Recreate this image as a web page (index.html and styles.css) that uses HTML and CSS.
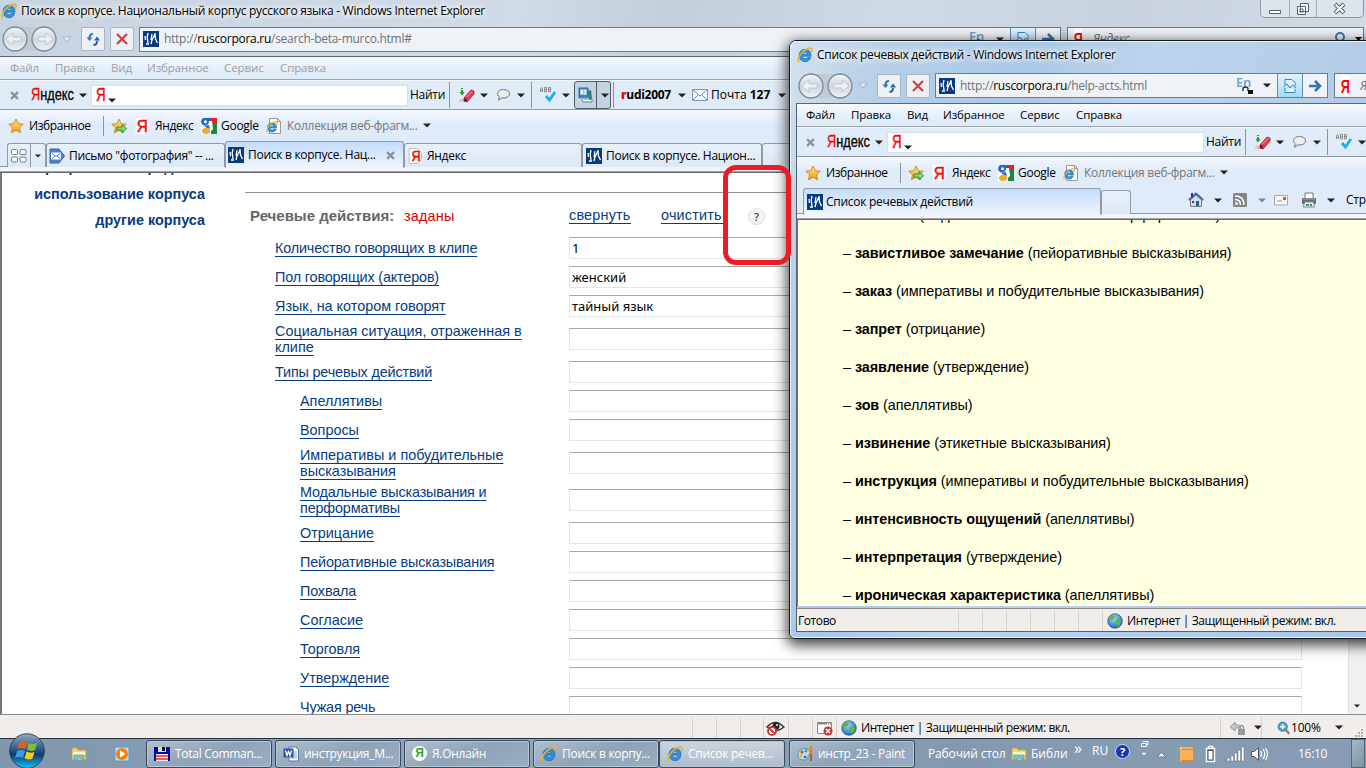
FILE: index.html
```html
<!DOCTYPE html>
<html lang="ru">
<head>
<meta charset="utf-8">
<title>Поиск в корпусе. Национальный корпус русского языка</title>
<link rel="stylesheet" href="styles.css">
</head>
<body>
<svg class="defs" width="0" height="0">
  <defs>
    <linearGradient id="gold" x1="0" y1="0" x2="0" y2="1"><stop offset="0" stop-color="#ffe88a"/><stop offset="1" stop-color="#f29a12"/></linearGradient>
    <radialGradient id="sea" cx=".4" cy=".3" r=".8"><stop offset="0" stop-color="#9cd8ff"/><stop offset="1" stop-color="#1557b8"/></radialGradient>
    <linearGradient id="disc" x1="0" y1="0" x2="0" y2="1"><stop offset="0" stop-color="#f3f6f9"/><stop offset=".5" stop-color="#cdd5de"/><stop offset="1" stop-color="#eef3f8"/></linearGradient>
    <linearGradient id="orb" x1="0" y1="0" x2="0" y2="1"><stop offset="0" stop-color="#8fa9bd"/><stop offset=".45" stop-color="#2b5c86"/><stop offset=".6" stop-color="#0b3c6d"/><stop offset="1" stop-color="#19c0f5"/></linearGradient>
    <symbol id="ie" viewBox="0 0 16 16"><path d="M14 9.300H5.400c.3 1.700 1.400 2.400 2.800 2.400 1.100 0 1.900-.5 2.300-1.200h3.200c-.7 2.700-2.900 4.200-5.500 4.200-3.700 0-6.200-2.500-6.200-6.100S4.500 2.300 8.200 2.300c3.800 0 6 2.700 5.800 7zM5.500 7.200h5c-.2-1.300-1.100-2-2.400-2s-2.300.7-2.600 2z" fill="#2a93e2" stroke="#1261ae" stroke-width=".6"/><path d="M2.200 14.800C.2 14 1.300 9.800 4.700 6 8.300 2 13 .2 14.600 1.500c.9.800.5 2.300-.4 4" fill="none" stroke="#eeb11f" stroke-width="1.600"/></symbol>
    <symbol id="rc" viewBox="0 0 16 16"><path d="M0 0h16v16H0z" fill="#063c7e"/><path d="M2 5l.5 4M5 2L4.200 6l.8 6M3 13h3M12 3L9 9l-1 4M12 2l.5 6 2 4M9 3l-1 6" fill="none" stroke="#fff" stroke-width="1.300"/></symbol>
    <symbol id="dn" viewBox="0 0 8 5"><path d="M0 .5h8L4 4.500z" fill="#222"/></symbol>
    <symbol id="star" viewBox="0 0 16 16"><path d="M8 1l2.200 4.700 5 .5-3.700 3.500 1 5L8 12.300 3.500 14.700l1-5L.8 6.200l5-.5z" fill="url(#gold)" stroke="#c7821b" stroke-width=".9"/></symbol>
    <symbol id="staradd" viewBox="0 0 16 16"><use href="#star"/><path d="M6 9h5V6.700l4.600 4-4.600 4v-2.500H6z" fill="#84dc6a" stroke="#278c27" stroke-width=".9"/></symbol>
    <symbol id="goog" viewBox="0 0 16 16"><path d="M0 0h8v16H0z" fill="#fff"/><path d="M8 0h8v5H8z" fill="#e22020"/><path d="M10 5h6v11h-6z" fill="#168b3e"/><path d="M6 0a4 4 0 100 7 4 4 0 002-3L10 0z" fill="#2469c8"/><circle cx="4.500" cy="3.700" r="1.500" fill="#fff"/><ellipse cx="5" cy="13" rx="4" ry="3" fill="#f2ab22"/><path d="M3 8l5-1 2 4-4-1z" fill="#2469c8"/><path d="M8 3h3l1 8-2 2-2-5z" fill="#fff"/></symbol>
    <symbol id="iedoc" viewBox="0 0 16 16"><path d="M3.500.5h8l3 3v12h-11z" fill="#fafafa" stroke="#999"/><path d="M11.500.5v3h3" fill="none" stroke="#999"/><svg y="3" width="12" height="12" viewBox="0 0 16 16"><use href="#ie"/></svg></symbol>
    <symbol id="eraser" viewBox="0 0 16 16"><path d="M1 12h5v3H0z" fill="#f5b8b5"/><path d="M3 1v1M3 3v2" stroke="#25a220" stroke-width="2"/><path d="M.5 5h5L3 8.500z" fill="#25a220"/><path d="M5 11l7-8 3 1v3l-7 8-3-1z" fill="#e53c50" stroke="#a61c34" stroke-width=".8"/><path d="M5 11l3 1v3l-3-1z" fill="#801a2a"/><path d="M7.500 10l6-6" stroke="#ff9ca6"/></symbol>
    <symbol id="bub" viewBox="0 0 16 16"><path d="M7.500 2.500c3.500 0 6 1.700 6 4.200s-2.500 4.300-5.500 4.300c-.7 0-1.500-.1-2-.3l-3.500 2.500.8-3.500C2 8.800 1.500 8 1.500 6.700c0-2.500 2.500-4.200 6-4.200z" fill="#eaecee" stroke="#72777c"/></symbol>
    <symbol id="check" viewBox="0 0 18 18"><path d="M1.500 6V3L2.500 1.500 3.500 3v3M1.500 4.500h2M5.500 6V1.500h2v4.300h-2M5.500 3.500h2M9.500 6V1.500h2v4.300h-2M9.500 3.500h2" fill="none" stroke="#777" stroke-width=".8"/><path d="M7 10l3.500 4L16 6" fill="none" stroke="#22a9ee" stroke-width="2.800"/></symbol>
    <symbol id="dict" viewBox="0 0 18 18"><path d="M4 13h11v3H6z" fill="#e9ffff" stroke="#29928f"/><path d="M11 5l3-1 1 9-3 1z" fill="#16867e"/><path d="M2 2h9v11H2z" fill="#4188bd" stroke="#2b6796"/><path d="M3 3h7v6H3z" fill="#8fbedd"/><path d="M4 8l1-4 1 4M7 5h2L7.500 8H9" fill="none" stroke="#fff"/><path d="M1 13h11" stroke="#fff"/></symbol>
    <symbol id="mail" viewBox="0 0 16 12"><path d="M.5.5h15v11H.5z" fill="#f5f8fb" stroke="#7c96ba"/><path d="M1 1l7 6 7-6M1 11l5-5M15 11l-5-5" fill="none" stroke="#6c8ab2"/></symbol>
    <symbol id="mailblue" viewBox="0 0 16 16"><path d="M1 1h9l5.500 7L10 15H1z" fill="#4882ca" stroke="#2d66ae"/><path d="M2 4.500h10v7H2z" fill="#fff"/><path d="M2.500 5L7 8.700 11.500 5M2.500 11l3.500-3M11.500 11L8 8" fill="none" stroke="#5489ca"/></symbol>
    <symbol id="quick" viewBox="0 0 16 14"><g fill="#f3f6fa" stroke="#7a828e"><rect x=".5" y=".5" width="6" height="5" rx="1"/><rect x="9" y=".5" width="6" height="5" rx="1"/><rect x=".5" y="8" width="6" height="5" rx="1"/><rect x="9" y="8" width="6" height="5" rx="1"/></g></symbol>
    <symbol id="navs" viewBox="0 0 58 28"><path d="M15 2h28v24H15z" fill="#c1cbd5"/><g fill="url(#disc)" stroke="#7e8893" stroke-width="1.300"><circle cx="14" cy="14" r="12"/><circle cx="43" cy="14" r="12"/></g><g fill="#eef1f4" stroke="#b9c1ca" stroke-width=".8"><path d="M5 14l7-6v4h8v4h-8v4z"/><path d="M52 14l-7-6v4h-8v4h8v4z"/></g></symbol>
    <symbol id="tri" viewBox="0 0 10 7"><path d="M1 1h8L5 6z" fill="#e5eaf0" stroke="#a9b3be"/></symbol>
    <symbol id="refresh" viewBox="0 0 16 16"><path d="M8 3C6 3 4.500 4 4.500 7" fill="none" stroke="#2c78c8" stroke-width="2"/><path d="M1.500 6.500h6L4.500 10z" fill="#2c78c8"/><path d="M8.500 14c2 0 3.500-1 3.500-4" fill="none" stroke="#245fae" stroke-width="2"/><path d="M9 9.500h6L12 5.500z" fill="#245fae"/></symbol>
    <symbol id="stop" viewBox="0 0 14 14"><path d="M2 2l10 10M12 2L2 12" stroke="#ca4444" stroke-width="2.300"/></symbol>
    <symbol id="compat" viewBox="0 0 14 16"><path d="M2 7V1.500h7L12 4.500V8" fill="#e3f6ff" stroke="#3184bd"/><path d="M2 10v4.500h10V11" fill="#e3f6ff" stroke="#3184bd"/><path d="M.5 9L4 6l3 4 2.500-3L13 10" fill="none" stroke="#3184bd"/></symbol>
    <symbol id="go" viewBox="0 0 14 14"><path d="M1 7h10M7 2l5 5-5 5" fill="none" stroke="#2d76ba" stroke-width="2.600"/></symbol>
    <symbol id="hook" viewBox="0 0 12 8"><path d="M1 5V3q0-2 2.500-2T6 3v2" fill="none" stroke="#222" stroke-width="1.300"/><path d="M6 4h5v4H6z" fill="#111"/></symbol>
    <symbol id="globe" viewBox="0 0 16 16"><circle cx="8" cy="8" r="7.300" fill="url(#sea)" stroke="#235095" stroke-width=".7"/><path d="M2 5l3-3 3 1-1 3-3 1-1 3-1-1zM8 8l3-2 3 2-1 4-3 2-1-3zM10 2l3 2-1 1z" fill="#55bd42"/></symbol>
    <symbol id="home" viewBox="0 0 16 16"><path d="M2.500 8v6.500h11V8L8 3z" fill="#d8dbe0" stroke="#777d8b"/><path d="M.8 8L8 1.500 15.200 8" fill="none" stroke="#4760a0" stroke-width="1.700"/><path d="M3 1h2v4H3z" fill="#2433a0"/><path d="M8 9h3v5H8z" fill="#235fa6"/><path d="M4 9h2v2H4z" fill="#444"/></symbol>
    <symbol id="rss" viewBox="0 0 14 14"><rect width="14" height="14" rx="1.500" fill="#858585"/><circle cx="3.500" cy="10.500" r="1.500" fill="#fff"/><path d="M2 6.500c3.500 0 5.500 2 5.500 5.500M2 3c6 0 9 3 9 9" fill="none" stroke="#fff" stroke-width="1.500"/></symbol>
    <symbol id="letter" viewBox="0 0 14 11"><path d="M.5.5h13v9.500H.5z" fill="#f7f7f7" stroke="#aaa"/><path d="M9 2h3v3H9z" fill="#e44"/><path d="M3 6h5" stroke="#999"/></symbol>
    <symbol id="print" viewBox="0 0 16 16"><path d="M4 1h8v6H4z" fill="#fff" stroke="#777"/><path d="M1 6h14v6H1z" fill="#686d73"/><path d="M2 7h12" stroke="#aaa"/><path d="M3.500 10h9l1 5h-11z" fill="#e8f4fc" stroke="#888"/><path d="M5 13h3" stroke="#1991d2" stroke-width="2"/><path d="M9 13h2" stroke="#28943d" stroke-width="2"/></symbol>
    <symbol id="folder" viewBox="0 0 16 16"><path d="M1 14V2h5l1 2h8v10z" fill="#f0d581" stroke="#bc9c40" stroke-width=".8"/><path d="M2 6h12v3H2z" fill="#fff5b9"/><path d="M3 14V9h10v5h-2v-2H6v2z" fill="#74c7e8" stroke="#3d92c0" stroke-width=".6"/></symbol>
    <symbol id="magn" viewBox="0 0 16 16"><path d="M10 10l4 4.500" stroke="#a67238" stroke-width="2.500"/><circle cx="6.500" cy="6.500" r="5.300" fill="#4b9be5" stroke="#347bc2"/><path d="M3.500 6.500h6M6.500 3.500v6" stroke="#fff" stroke-width="1.800"/></symbol>
  </defs>
</svg>

<div class="desktop">
  <section class="window main">
    <header class="titlebar">
      <svg class="i16"><use href="#ie"/></svg>
      <span class="title">Поиск в корпусе. Национальный корпус русского языка - Windows Internet Explorer</span>
      <div class="controls">
        <span><svg width="14" height="16"><path d="M1.500 9.500h11v3h-11z" fill="#fff" stroke="#536077"/></svg></span>
        <span><svg width="14" height="16"><path d="M4.500 2.500h8v8h-8zM1.500 5.500h8v8h-8z" fill="#fff" stroke="#536077"/><path d="M4 8h3v3H4z" fill="none" stroke="#536077"/></svg></span>
        <span><svg width="14" height="16"><path d="M2 3l9 9M11 3l-9 9" stroke="#536077" stroke-width="4"/><path d="M2.500 3.500l8 8M10.500 3.500l-8 8" stroke="#fff" stroke-width="2"/></svg></span>
      </div>
    </header>
    <nav class="navbar">
      <svg class="navs"><use href="#navs"/></svg>
      <svg class="tri"><use href="#tri"/></svg>
      <span class="btn"><svg class="i16"><use href="#refresh"/></svg></span>
      <span class="btn"><svg width="14" height="14"><use href="#stop"/></svg></span>
      <div class="address a-main">
        <svg class="i16"><use href="#rc"/></svg>
        <span class="url">http://<b>ruscorpora.ru</b>/search-beta-murco.html#</span>
        <span class="en">En</span><svg class="hook"><use href="#hook"/></svg><svg class="dn"><use href="#dn"/></svg>
        <span class="cell on"><svg width="14" height="16"><use href="#compat"/></svg></span>
        <span class="cell"><svg width="14" height="14"><use href="#go"/></svg></span>
      </div>
      <div class="search"><span class="ya">Я</span><i>Яндекс</i><svg class="loupe" width="30" height="14"><circle cx="7" cy="5" r="4" fill="none" stroke="#3478b0" stroke-width="2"/><path d="M22 5h7l-3.500 4z"/></svg></div>
    </nav>
    <div class="menu dim"><span>Файл</span><span>Правка</span><span>Вид</span><span>Избранное</span><span>Сервис</span><span>Справка</span></div>
    <div class="yabar">
      <svg class="x" viewBox="0 0 8 8"><path d="M1 1l6 6M7 1L1 7" stroke="#8b9098" stroke-width="2"/></svg>
      <span class="yalogo"><b>Я</b>ндекс</span><svg class="dn"><use href="#dn"/></svg>
      <span class="yain"><b>Я</b><svg class="dn"><use href="#dn"/></svg></span>
      <span class="find">Найти</span><i class="sep"></i>
      <svg class="i16"><use href="#eraser"/></svg><svg class="dn"><use href="#dn"/></svg>
      <svg class="i16"><use href="#bub"/></svg><svg class="dn"><use href="#dn"/></svg><i class="sep"></i>
      <svg class="i18"><use href="#check"/></svg><svg class="dn"><use href="#dn"/></svg>
      <span class="split"><svg class="i18"><use href="#dict"/></svg><em><svg class="dn"><use href="#dn"/></svg></em></span><i class="sep"></i>
      <span class="user"><b>r</b>udi2007</span><svg class="dn"><use href="#dn"/></svg>
      <svg width="16" height="12"><use href="#mail"/></svg><span class="post">Почта <b>127</b></span><svg class="dn"><use href="#dn"/></svg>
    </div>
    <div class="favbar">
      <svg class="i16"><use href="#star"/></svg><span class="f1">Избранное</span><i class="sep"></i>
      <svg class="i16"><use href="#staradd"/></svg><span class="yaico">Я</span><span class="f2">Яндекс</span>
      <svg class="i16"><use href="#goog"/></svg><span class="f3">Google</span>
      <svg class="i16"><use href="#iedoc"/></svg><span class="f4">Коллекция веб-фрагм...</span><svg class="dn"><use href="#dn"/></svg>
    </div>
    <div class="tabs">
      <span class="tab quick"><svg width="16" height="14"><use href="#quick"/></svg><em><svg class="dn s"><use href="#dn"/></svg></em></span>
      <span class="tab w1"><svg class="i16"><use href="#mailblue"/></svg><span class="k1">Письмо "фотография" -- ...</span></span>
      <span class="tab w2 active"><svg class="i16"><use href="#rc"/></svg><span class="k2">Поиск в корпусе. Нац...</span><svg class="x" viewBox="0 0 8 8"><path d="M1 1l6 6M7 1L1 7" stroke="#8b9098" stroke-width="2"/></svg></span>
      <span class="tab w3"><span class="yaico tag">Я</span><span class="k2">Яндекс</span></span>
      <span class="tab w4"><svg class="i16"><use href="#rc"/></svg><span class="k2">Поиск в корпусе. Национ...</span></span>
      <span class="tab rest"></span>
    </div>
    <div class="page">
      <aside><p>программные средства</p><p>использование корпуса</p><p>другие корпуса</p></aside>
      <main>
        <div class="head"><b>Речевые действия:</b><em>заданы</em><a class="c1">свернуть</a><a class="c2">очистить</a><span class="help">?</span></div>
        <div class="row"><label><a class="tight">Количество говорящих в клипе</a></label><div class="in">1</div></div>
        <div class="row"><label><a class="tight">Пол говорящих (актеров)</a></label><div class="in">женский</div></div>
        <div class="row"><label><a>Язык, на котором говорят</a></label><div class="in">тайный язык</div></div>
        <div class="row two"><label><a>Социальная ситуация, отраженная в<br>клипе</a></label><div class="in"></div></div>
        <div class="row"><label><a class="tight">Типы речевых действий</a></label><div class="in"></div></div>
        <div class="row sub"><label><a>Апеллятивы</a></label><div class="in"></div></div>
        <div class="row sub"><label><a>Вопросы</a></label><div class="in"></div></div>
        <div class="row sub two"><label><a>Императивы и побудительные<br>высказывания</a></label><div class="in"></div></div>
        <div class="row sub two"><label><a class="tight">Модальные высказывания и<br>перформативы</a></label><div class="in"></div></div>
        <div class="row sub"><label><a>Отрицание</a></label><div class="in"></div></div>
        <div class="row sub"><label><a class="tight">Пейоративные высказывания</a></label><div class="in"></div></div>
        <div class="row sub"><label><a class="tight">Похвала</a></label><div class="in"></div></div>
        <div class="row sub"><label><a>Согласие</a></label><div class="in"></div></div>
        <div class="row sub"><label><a>Торговля</a></label><div class="in"></div></div>
        <div class="row sub"><label><a>Утверждение</a></label><div class="in"></div></div>
        <div class="row sub"><label><a class="tight">Чужая речь</a></label><div class="in"></div></div>
      </main>
      <div class="scroll"><svg class="dn s"><use href="#dn"/></svg></div>
    </div>
    <footer class="status s-main">
      <span></span><span></span><span></span><span></span>
      <span><svg width="20" height="18"><path d="M1 8q8-9 17 0-8 7-17 0z" fill="#eee" stroke="#333" stroke-width="1.300"/><circle cx="10" cy="7" r="3.500" fill="#222"/><circle cx="11" cy="6" r="1" fill="#fff"/><circle cx="6" cy="12" r="4" fill="#fff" stroke="#d0342c" stroke-width="1.800"/><path d="M3.500 9.500l5 5" stroke="#d0342c" stroke-width="1.800"/></svg></span>
      <span></span>
      <span><svg width="16" height="16"><path d="M.5 2.500h14v11H.5z" fill="#fff" stroke="#888"/><path d="M1 3.500h13" stroke="#888" stroke-width="2" stroke-dasharray="9 1 1 1"/><circle cx="11" cy="11" r="4.500" fill="#c93838"/><path d="M9 9l4 4M13 9l-4 4" stroke="#fff" stroke-width="1.500"/></svg></span>
      <span class="zone"><svg class="i16"><use href="#globe"/></svg><em>Интернет | Защищенный режим: вкл.</em></span>
      <span class="lock"><svg width="18" height="16"><path d="M1 7l5-5v3q5-1 6 4-3-2-6-1v3z" fill="#c9c9c9" stroke="#999"/><path d="M9 9h7v6H9z" fill="#999"/><path d="M10.500 9V6.500q2-2 4 0V9" fill="none" stroke="#999" stroke-width="1.300"/></svg><svg class="dn"><use href="#dn"/></svg></span>
      <span class="zoom"><svg width="14" height="14"><use href="#magn"/></svg><em>100%</em><svg class="dn"><use href="#dn"/></svg><svg class="grip" width="8" height="8"><path d="M6 1h2M3 4h2M6 4h2M0 7h2M3 7h2M6 7h2" stroke="#b0b0b0" stroke-width="2"/></svg></span>
    </footer>
  </section>

  <footer class="taskbar">
    <svg class="orb" width="36" height="36"><circle cx="18" cy="18" r="17.300" fill="url(#orb)" stroke="#234" stroke-width=".8"/><path d="M10 10q4-3 8-.500l-1.500 6.500q-4-2-8 0z" fill="#ea5b24"/><path d="M19.500 10q4 2 8.500 0l-2 7q-4 2-8-.5z" fill="#82bb36"/><path d="M8 18q4-2 8 0l-2 7q-4-2-8 0z" fill="#3a9bdf"/><path d="M17.500 18.500q4 2 8 .5l-2 6.500q-4 2-8-.5z" fill="#fbc726"/></svg>
    <svg class="q1" width="16" height="16"><use href="#folder"/></svg>
    <svg class="q2" width="16" height="16"><path d="M1 1h14v14H1z" fill="#c2dcf0" stroke="#4c9fdb"/><circle cx="8" cy="8" r="6" fill="#f7820d"/><path d="M6 4.500v7l5.500-3.500z" fill="#fff"/></svg>
    <span class="task b1"><svg class="i16"><path d="M0 1h16v14H0z" fill="#0808b0"/><path d="M4 1h8v5H4z" fill="#ddd"/><path d="M8 1h3v4H8z" fill="#111"/><path d="M2 8h12v7H2z" fill="#fff"/><path d="M2 10h12M2 13h12" stroke="#e22" stroke-width="1.300"/></svg><em>Total Comman...</em></span>
    <span class="task b2"><svg class="i16"><path d="M6 1h7l2.500 3v11H6z" fill="#fff" stroke="#58739c"/><path d="M8 6h6M8 8h6M8 10h6M8 12h6" stroke="#7ea2d3"/><path d="M.5 2.500h10v9H.5z" fill="#2b579f"/><path d="M2.500 4.500L4 9.500l1.500-4 1.500 4L8.500 4.500" fill="none" stroke="#fff" stroke-width="1.300"/></svg><em>инструкция_М...</em></span>
    <span class="task b3"><span class="online">Я</span><em>Я.Онлайн</em></span>
    <span class="task b4"><svg class="i16"><use href="#ie"/></svg><em>Поиск в корпу...</em></span>
    <span class="task b5 lit"><svg class="i16"><use href="#ie"/></svg><em>Список речев...</em></span>
    <span class="task b6"><svg class="i16"><path d="M1 9c0-4 3-6.500 7-6.500 3 0 5 1.500 5 4 0 2-2 2-2 4 0 2-1.500 3.500-4 3.500-3.500 0-6-2-6-5z" fill="#b7dcef" stroke="#5090b5"/><circle cx="5" cy="6" r="1.500" fill="#e33"/><circle cx="9" cy="5" r="1.400" fill="#38a838"/><circle cx="4" cy="10" r="1.400" fill="#e8b31e"/><circle cx="8" cy="11" r="1.300" fill="#36c"/><path d="M14 0v8" stroke="#e58121" stroke-width="2.500"/><path d="M14 8v7" stroke="#b45f20" stroke-width="2"/></svg><em>инстр_23 - Paint</em></span>
    <span class="desk">Рабочий стол</span>
    <svg class="q3" width="16" height="16"><use href="#folder"/></svg><span class="lib">Библи</span><span class="more">»</span>
    <span class="ru">RU</span><span class="qm">?</span>
    <svg class="tray" width="210" height="30">
      <g fill="none" stroke="#fff"><path d="M2.500 4.500h5v3h-5zM4 3V2.500h5v3H8"/><path d="M1 14h8L5 18z" transform="translate(2.500 7) scale(.5)" fill="#fff"/></g>
      <path d="M18 18l4.500-4.500L27 18z" fill="#fff" stroke="#678"/>
      <path d="M41 8h13v14H41z" fill="#ee7d1a"/><path d="M43 11h11v10H43z" fill="#fbb352"/><path d="M42 8v14M41 9h13" stroke="#ffe6a0"/>
      <path d="M67.500 9.500h8v13h-8zM69.500 7.500h4v2h-4z" fill="#475b70" stroke="#fff" stroke-width="1.500"/><path d="M69.500 12h4v8.500h-4z" fill="#fff"/>
      <path d="M88 19h3v3h-3zM92 17h2.500v5H92zM95.500 14h2.500v8h-2.500zM99 11h2.500v11H99zM102.500 8h2.500v14h-2.500z" fill="#fff" stroke="#5c6c7c" stroke-width=".5"/>
      <path d="M112.500 12.500h3l4-4v13l-4-4h-3z" fill="#fff" stroke="#556"/><path d="M121.500 12q2 3 0 6M124 10q3.500 5 0 10M126.500 9q4 6 0 12" fill="none" stroke="#fff" stroke-width="1.200"/>
    </svg>
    <span class="clock">16:10</span><span class="show"></span>
  </footer>

  <section class="window popup">
    <div class="frame">
    <header class="titlebar">
      <svg class="i16"><use href="#ie"/></svg>
      <span class="title">Список речевых действий - Windows Internet Explorer</span>
    </header>
    <nav class="navbar">
      <svg class="navs"><use href="#navs"/></svg>
      <svg class="tri"><use href="#tri"/></svg>
      <span class="btn"><svg class="i16"><use href="#refresh"/></svg></span>
      <span class="btn"><svg width="14" height="14"><use href="#stop"/></svg></span>
      <div class="address a-pop">
        <svg class="i16"><use href="#rc"/></svg>
        <span class="url">http://<b>ruscorpora.ru</b>/help-acts.html</span>
        <span class="en">En</span><svg class="hook"><use href="#hook"/></svg><svg class="dn"><use href="#dn"/></svg>
        <span class="cell on"><svg width="14" height="16"><use href="#compat"/></svg></span>
        <span class="cell"><svg width="14" height="14"><use href="#go"/></svg></span>
      </div>
      <div class="search"><span class="ya">Я</span><i>Яндекс</i></div>
    </nav>
    <div class="client">
    <div class="menu"><span>Файл</span><span>Правка</span><span>Вид</span><span>Избранное</span><span>Сервис</span><span>Справка</span></div>
    <div class="yabar">
      <svg class="x" viewBox="0 0 8 8"><path d="M1 1l6 6M7 1L1 7" stroke="#8b9098" stroke-width="2"/></svg>
      <span class="yalogo"><b>Я</b>ндекс</span><svg class="dn"><use href="#dn"/></svg>
      <span class="yain"><b>Я</b><svg class="dn"><use href="#dn"/></svg></span>
      <span class="find">Найти</span><i class="sep"></i>
      <svg class="i16"><use href="#eraser"/></svg><svg class="dn"><use href="#dn"/></svg>
      <svg class="i16"><use href="#bub"/></svg><svg class="dn"><use href="#dn"/></svg><i class="sep"></i>
      <svg class="i18"><use href="#check"/></svg><svg class="dn"><use href="#dn"/></svg>
    </div>
    <div class="favbar">
      <svg class="i16"><use href="#star"/></svg><span class="f1">Избранное</span><i class="sep"></i>
      <svg class="i16"><use href="#staradd"/></svg><span class="yaico">Я</span><span class="f2">Яндекс</span>
      <svg class="i16"><use href="#goog"/></svg><span class="f3">Google</span>
      <svg class="i16"><use href="#iedoc"/></svg><span class="f4">Коллекция веб-фрагм...</span><svg class="dn"><use href="#dn"/></svg>
    </div>
    <div class="tabs">
      <span class="tab wp active"><svg class="i16"><use href="#rc"/></svg><span class="kp">Список речевых действий</span></span>
      <span class="tab stub"></span>
      <div class="cmds"><svg class="i16"><use href="#home"/></svg><svg class="dn"><use href="#dn"/></svg><svg width="14" height="14"><use href="#rss"/></svg><svg class="dn pale"><use href="#dn"/></svg><svg width="14" height="11"><use href="#letter"/></svg><svg class="i16"><use href="#print"/></svg><svg class="dn"><use href="#dn"/></svg><span>Страница</span></div>
    </div>
    <div class="help-page">
      <p>– <b>желание</b> (модальные высказывания и перформативы)</p>
      <p>– <b>завистливое замечание</b> (пейоративные высказывания)</p>
      <p>– <b>заказ</b> (императивы и побудительные высказывания)</p>
      <p>– <b>запрет</b> (отрицание)</p>
      <p>– <b>заявление</b> (утверждение)</p>
      <p>– <b>зов</b> (апеллятивы)</p>
      <p>– <b>извинение</b> (этикетные высказывания)</p>
      <p>– <b>инструкция</b> (императивы и побудительные высказывания)</p>
      <p>– <b>интенсивность ощущений</b> (апеллятивы)</p>
      <p>– <b>интерпретация</b> (утверждение)</p>
      <p>– <b>ироническая характеристика</b> (апеллятивы)</p>
    </div>
    <footer class="status s-pop">
      <span>Готово</span><span></span><span></span><span></span><span></span><span></span><span></span>
      <span class="zone"><svg class="i16"><use href="#globe"/></svg><em>Интернет | Защищенный режим: вкл.</em></span>
    </footer>
    </div>
    </div>
  </section>

  <div class="mark"></div>
</div>
</body>
</html>
```
FILE: styles.css
```css
* { box-sizing: border-box; }
body { margin: 0; font: 12px/16px "Open Sans", "Noto Sans", sans-serif; letter-spacing: -.28px; color: #000; }
em, i { font-style: normal; }
svg { flex: none; display: block; }
span { white-space: nowrap; }
.defs { position: absolute; }
.desktop { position: relative; width: 1366px; height: 768px; overflow: hidden; background: #d3dde8; }
.i16 { width: 16px; height: 16px; }
.i18 { width: 18px; height: 18px; }
.dn { width: 8px; height: 5px; }
.dn.s { width: 6px; height: 4px; }
.dn.pale { opacity: .5; }
.x { width: 9px; height: 9px; }
.sep { width: 1px; background: #8c939c; flex: none; }

.window { display: flex; flex-direction: column; }
.main { height: 738px; background: linear-gradient(100deg, #c7d3e0, #d0dbe7 35%, #c3ceda 45%, #d0dae5 60%, #c9d3df 75%, #d4dde7); }
.titlebar { display: flex; align-items: center; height: 22px; padding-left: 1px; gap: 4px; flex: none; }
.title { text-shadow: 0 0 5px #fff, 0 0 8px #fff, 0 0 10px #fff; }
.controls { margin: 0 2px 0 auto; width: 104px; height: 18px; align-self: flex-start; display: grid; grid-template-columns: 28px 27px 1fr; border: 1px solid #8d99a7; border-top: 0; border-radius: 0 0 5px 5px; background: #dde3ea; }
.controls span { display: flex; align-items: center; justify-content: center; border-left: 1px solid #a2abb7; }
.controls span:first-child { border-left: 0; }
.navbar { display: flex; align-items: center; height: 34px; padding-left: 1px; flex: none; }
.navs { width: 58px; height: 28px; }
.tri { width: 10px; height: 7px; margin: 0 9px 0 3px; }
.btn { width: 24px; height: 24px; margin-right: 5px; border: 1px solid #a9b5c2; border-radius: 2px; background: #edf1f6; display: flex; align-items: center; justify-content: center; flex: none; }
.address { height: 25px; display: flex; align-items: center; border: 1px solid #6e7a87; background: #eff3f7; padding-left: 3px; flex: none; margin-right: 6px; }
.a-main { width: 922px; }
.a-pop { width: 393px; }
.url { margin-left: 5px; color: #6d7278; flex: 1; }
.url b { font-weight: 400; color: #000; }
.en { color: #6d9cc7; font-weight: 600; font-size: 13px; align-self: flex-start; }
.hook { width: 12px; height: 8px; margin: 8px 9px 0 -9px; }
.address .dn { margin-right: 6px; }
.cell { width: 25px; height: 23px; display: flex; align-items: center; justify-content: center; border-left: 1px solid #5f8db6; }
.cell.on { background: linear-gradient(#e2f4fd, #a6daf5); }
.search { width: 297px; height: 25px; display: flex; align-items: center; border: 1px solid #6e7a87; background: #eff3f7; flex: none; padding-left: 4px; }
.ya { color: #f00; font: 700 18px/22px "Liberation Sans", sans-serif; width: 12px; height: 20px; background: #fff; transform: scaleX(.7); }
.search i { font-style: italic; color: #6d7278; margin-left: 9px; }
.loupe { margin-left: auto; }

.menu { height: 24px; flex: none; display: grid; grid-template-columns: 45px 56px 36px 77px 56px 60px; align-items: center; padding: 0 0 1px 10px; border-top: 1px solid #5c6670; border-bottom: 1px solid #9aa3ae; background: linear-gradient(#f7faff, #e1ecf9 70%); font-size: 11.500px; letter-spacing: -.1px; }
.dim { color: #9a9fa6; }
.yabar { height: 30px; flex: none; display: flex; align-items: center; background: #e0ebf8; border-bottom: 1px solid #8f98a4; border-top: 1px solid #f4f8fd; padding-left: 10px; }
.yabar > .sep { height: 26px; }
.yabar .dn { margin-right: -1px; }
.yalogo { width: 48px; margin-left: 12px; font: 17px/20px "Liberation Sans", sans-serif; letter-spacing: 0; transform: scaleX(.75); transform-origin: 0 50%; -webkit-text-stroke: .3px; }
.yalogo b, .yain b { font-weight: 400; color: #f00; }
.yain { width: 317px; height: 21px; margin-left: 5px; background: #fff; border: 1px solid #d6dfe9; display: flex; align-items: center; padding-left: 4px; }
.yain b { font: 19px/20px "Liberation Sans", sans-serif; width: 12px; transform: scaleX(.7); transform-origin: 0 50%; -webkit-text-stroke: .4px #f00; }
.yain .dn { margin-top: 10px; }
.find { width: 41px; padding-left: 2px; }
.yabar .i16 { margin: 0 5px 0 9px; }
.yabar .i16 + .dn { margin-right: 2px; }
.yabar .dn + .i16 { margin-left: 6px; }
.yabar .i16 + .dn + .sep { margin-left: 4px; }
.yabar .i18 { margin: 0 5px 0 7px; }
.split { display: flex; align-items: center; width: 37px; height: 28px; margin: 0 2px 0 5px; border: 1px solid #4e5a67; border-radius: 3px; background: #c5d2df; }
.split .i18 { margin: 0 0 0 2px !important; }
.split em { border-left: 1px solid #4e5a67; height: 100%; display: flex; align-items: center; padding-left: 4px; margin-left: 1px; }
.user { margin-left: 7px; width: 57px; font-weight: 700; font-size: 12px; letter-spacing: -.3px; }
.user b { color: #e00; }
.yabar .user + .dn { margin-right: 6px; }
.post { margin-left: 3px; width: 67px; letter-spacing: 0; }

.favbar { height: 31px; flex: none; display: flex; align-items: center; background: linear-gradient(#f5f8fe, #e0ebf9 45%); padding-left: 8px; }
.favbar .sep { height: 20px; margin-right: 7px; }
.f1 { width: 74px; margin-left: 5px; letter-spacing: -.4px; }
.yaico { width: 15px; height: 16px; margin: 0 5px 0 8px; background: #fff; border-radius: 0 8px 8px 0; color: #f00; font: 17px/17px "Liberation Sans", sans-serif; padding-left: 1px; transform: scaleX(.9); -webkit-text-stroke: .5px #f00; }
.f2 { width: 46px; letter-spacing: -.4px; }
.f3 { width: 45px; margin-left: 4px; }
.f4 { width: 136px; margin-left: 5px; color: #777; }

.tabs { height: 32px; flex: none; display: flex; align-items: flex-start; background: linear-gradient(#e0ebf9 25px, #8f98a4 25px 26px, #f2f6fc 26px 30px, #a3a3a3 30px 31px, #696969 31px); padding: 0 0 0 7px; }
.tab { height: 24px; margin-top: 2px; border: 1px solid #8f99a7; border-bottom: 0; border-radius: 3px 3px 0 0; background: linear-gradient(#e8f1fa, #dde8f5); display: flex; align-items: center; padding-left: 3px; flex: none; }
.tab.active { height: 27px; margin-top: 0; background: linear-gradient(#c2dcfb, #f0f5fc); }
.quick { width: 39px; }
.quick em { border-left: 1px solid #8f99a7; height: 100%; display: flex; align-items: center; margin-left: 3px; padding-left: 4px; }
.w1 { width: 179px; padding-left: 2px; } .w2 { width: 179px; padding-left: 2px; } .w3 { width: 178px; } .w4 { width: 180px; } .rest { flex: 1; }
.k1 { margin-left: 4px; } .k2 { margin-left: 4px; } .w2 .k2 { width: 138px; } .kp { margin-left: 3px; }
.tag { margin: 0; border: 1px solid #bbb; font-size: 14px; line-height: 15px; padding-left: 2px; }

.page { height: 541px; flex: none; display: flex; background: #fff; border-left: 2px solid #777; overflow: hidden; font: 14.400px/16px "Liberation Sans", Arial, sans-serif; letter-spacing: 0; color: #063c7e; }
aside { width: 203px; text-align: right; font-weight: 700; margin-top: -14px; flex: none; }
aside p { margin: 0 0 10px; }
aside p:first-child { margin-bottom: 11px; }
main { margin: 19px 0 0 40px; width: 1057px; border-top: 1px solid #8e8e8e; flex: none; }
.head { display: flex; height: 40px; align-items: center; padding: 6px 0 0 5px; }
.head b { color: #666; width: 154px; font-size: 15px; }
.head em { color: #e00000; width: 165px; letter-spacing: .2px; }
.head a { letter-spacing: .2px; }
.c1 { width: 62px; margin-right: 30px; } .c2 { width: 62px; margin-right: 25px; }
a { border-bottom: 1px solid #063c7e; line-height: 15px; }
label a { border: 0; text-decoration: underline; text-underline-offset: 3px; text-decoration-thickness: 1px; line-height: 16px; text-decoration-skip-ink: none; }
.tight { letter-spacing: -.16px; }
.help { width: 17px; height: 17px; border-radius: 50%; border: 1px solid #ddd; background: #f4f4f4; color: #444; font: 600 11px/15px "Open Sans", sans-serif; text-align: center; }
.row { height: 29px; display: grid; grid-template-columns: 294px 733px; padding-left: 30px; align-items: center; }
.sub { padding-left: 55px; grid-template-columns: 269px 733px; }
.two { height: 37px; }
.in { height: 22px; border: 1px solid #e2e6ec; border-top-color: #a6a7ad; color: #000; font: 13px/21px "Noto Sans", sans-serif; padding-left: 2px; }
.scroll { margin-left: auto; width: 18px; background: #f0f0f0; border-left: 1px solid #e2e2e2; display: flex; align-items: flex-end; padding: 0 0 6px 5px; }

.status { display: grid; flex: none; background: #f0edeb; font-size: 12px; letter-spacing: -.42px; }
.status > span { border-left: 1px solid #d4d0cf; display: flex; align-items: center; justify-content: center; }
.status > span:first-child { border-left: 0; }
.status > .zone { justify-content: flex-start; padding-left: 4px; gap: 4px; }
.s-main { height: 24px; padding: 2px 0 0; border-top: 1px solid #8b8b8b; grid-template-columns: 692px 24px 24px 23px 25px 24px 24px 384px 41px 1fr; }
.status > .lock, .status > .zoom { justify-content: flex-start; padding-left: 8px; gap: 7px; }
.status > .zoom { padding-left: 15px; gap: 0; letter-spacing: -.2px; }
.zoom em { width: 44px; }
.grip { margin: 10px 0 0 12px; }

.taskbar { display: flex; align-items: center; height: 30px; border-top: 1px solid #22303f; background: linear-gradient(90deg, #8096ad, #91a7bd 35%, #8499af 70%, #869db5); color: #fff; }
.taskbar > * { flex: none; }
.orb { margin: -6px 0 0 9px; }
.q1 { margin-left: 26px; } .q2 { margin: 0 16px 0 27px; }
.task { height: 28px; width: 126px; margin-right: 3px; border: 1px solid #394a5d; border-radius: 3px; box-shadow: inset 0 0 0 1px #b9c7d5; background: linear-gradient(160deg, #b1c0cf, #8fa3b7 50%, #9aafc4); display: flex; align-items: center; padding-left: 7px; gap: 5px; overflow: hidden; }
.b4 { margin-right: 0; } .b5 { margin-right: 4px; }
.lit { background: linear-gradient(#cbd5df, #adbccb); }
.online { width: 15px; height: 15px; border-radius: 50%; background: #fff; color: #2aa52a; font: 700 12px/15px "Liberation Sans", sans-serif; text-align: center; }
.desk { margin-left: 10px; width: 83px; letter-spacing: -.15px; }
.lib { margin-left: 4px; width: 43px; letter-spacing: 0; }
.more { width: 18px; font-size: 16px; margin-top: -12px; }
.ru { width: 23px; margin-top: -5px; letter-spacing: 0; }
.qm { width: 15px; height: 15px; border-radius: 50%; background: #1a35b5; border: 1px solid #ccd8ef; font: 700 11px/13px "Open Sans", sans-serif; text-align: center; margin-top: -4px; }
.tray { margin-left: 9px; width: 159px; height: 30px; }
.clock { width: 53px; }
.show { width: 14px; height: 29px; border: 1px solid #55677b; background: linear-gradient(135deg, #a9b8c8, #7d91a6); }

.mark { position: absolute; left: 723px; top: 165px; width: 68px; height: 100px; border: 5px solid #ed1c24; border-radius: 13px; }

.popup { position: absolute; left: 789px; top: 40px; width: 600px; height: 599px; border: 1px solid #14191f; border-radius: 7px 0 0 6px; box-shadow: 0 4px 14px 2px rgba(0,0,0,.75); background: linear-gradient(110deg, #d5e2f0, #b7cfe8 12%, #a9c8e6 30%, #bcd3ea 45%, #a8c6e5); }
.frame { padding: 0 0 0 6px; height: 100%; border: 1px solid #e6f0fa; border-radius: 6px 0 0 5px; display: flex; flex-direction: column; }
.popup .titlebar { height: 26px; padding-left: 0; }
.popup .navbar { height: 35px; padding-left: 0; }
.client { border-left: 1px solid #55606c; border-bottom: 1px solid #55606c; height: 529px; display: flex; flex-direction: column; margin-left: -1px; }
.popup .menu { padding-left: 9px; }
.popup .yabar { padding-left: 9px; }
.popup .tabs { padding-left: 6px; }
.wp { width: 298px; padding-left: 3px; }
.stub { width: 30px; }
.cmds { display: flex; align-items: center; height: 24px; margin-left: 57px; }
.cmds > .dn { margin: 0 11px 0 10px; }
.cmds > .dn.pale { margin: 0 8px 0 11px; }
.cmds .i16:nth-of-type(6) { margin-left: 13px; }
.help-page { height: 386px; flex: none; overflow: hidden; background: #ffffe1; border-left: 1px solid #777; padding-left: 45px; font: 14.400px/18px "Liberation Sans", Arial, sans-serif; letter-spacing: -.06px; }
.help-page p { margin: 0; height: 38px; white-space: nowrap; }
.help-page p:first-child { margin-top: -14px; }
.s-pop { border-top: 1px solid #8b8b8b; margin-top: 2px; height: 23px; grid-template-columns: 161px repeat(6, 24px) 1fr; padding: 2px 0 0; }
.status.s-pop > span:first-child { justify-content: flex-start; padding-left: 1px; }
```
